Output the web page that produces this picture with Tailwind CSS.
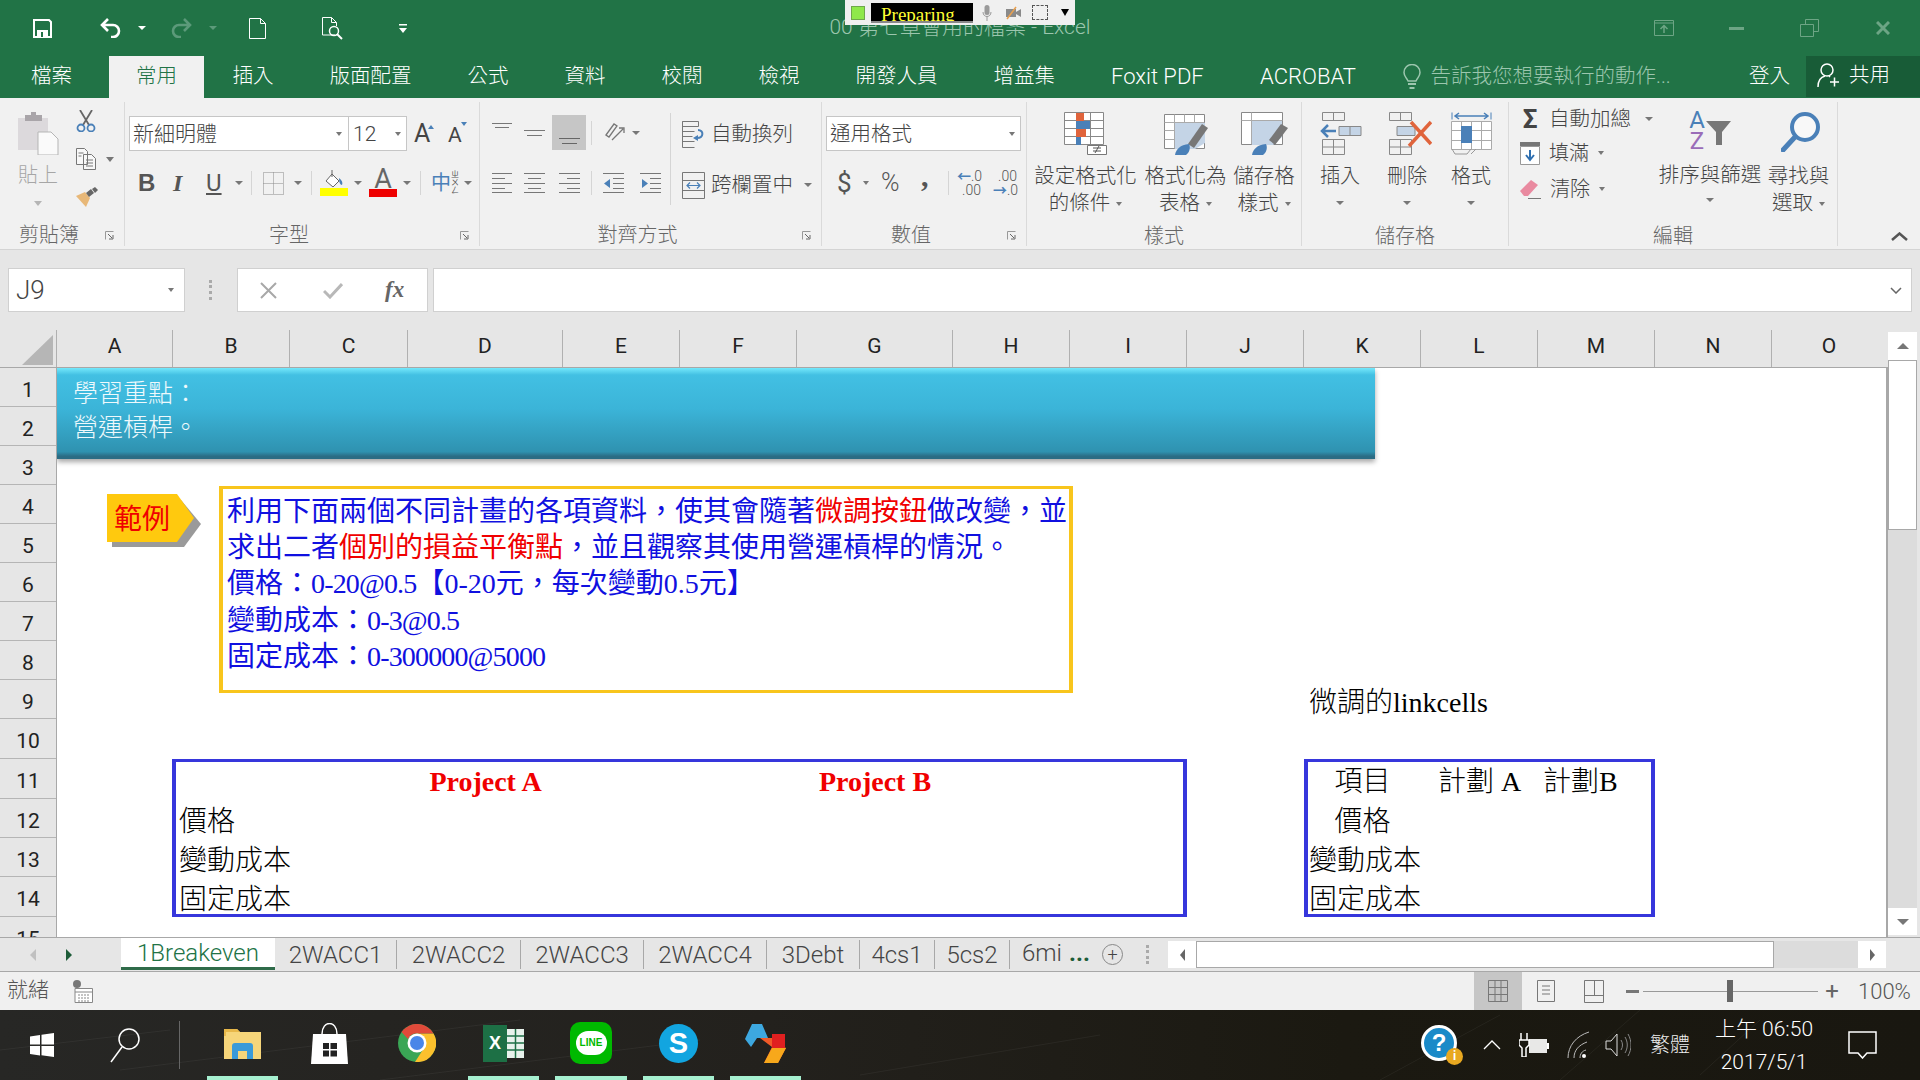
<!DOCTYPE html>
<html lang="zh-Hant">
<head>
<meta charset="UTF-8">
<title>00 第七章會用的檔案 - Excel</title>
<script src="https://cdn.jsdelivr.net/npm/@tailwindcss/browser@4"></script>
</head>
<body class="w-[1920px] h-[1080px] overflow-hidden flex flex-col bg-[#f1f1f1] text-[#444] font-['Roboto','Noto_Sans_CJK_TC',sans-serif] font-light">

<!-- title bar -->
<div class="relative h-[56px] shrink-0 bg-[#217346] grid grid-cols-[1fr_auto_1fr] items-center">
  <div class="flex items-center">
    <svg class="ml-[33px]" width="19" height="19" viewBox="0 0 19 19"><path d="M1 1h15l2 2v15H1z" fill="none" stroke="#fff" stroke-width="2"/><path d="M4 11h11v7H4z" fill="#fff"/><path d="M8 13h2v5H8z" fill="#217346"/></svg>
    <svg class="ml-[48px]" width="21" height="20" viewBox="0 0 21 20"><path d="M2 7h11a6 6 0 0 1 0 12h-2M8 1 2 7l6 6" fill="none" stroke="#fff" stroke-width="2.6"/></svg>
    <span class="ml-[17px] border-x-[4px] border-x-transparent border-t-[4px] border-t-white"></span>
    <svg class="ml-[25px]" width="21" height="20" viewBox="0 0 21 20"><path d="M19 7H8a6 6 0 0 0 0 12h2M13 1l6 6-6 6" fill="none" stroke="#5c9a7a" stroke-width="2.6"/></svg>
    <span class="ml-[17px] border-x-[4px] border-x-transparent border-t-[4px] border-t-[#5c9a7a]"></span>
    <svg class="ml-[32px]" width="17" height="21" viewBox="0 0 17 21"><path d="M.5.5h11l5 5v15H.5zM11.500.5v5h5" fill="none" stroke="#fff"/></svg>
    <svg class="ml-[56px]" width="21" height="23" viewBox="0 0 21 23"><path d="M13 18H.5V.5h9l5 5V9M9.500.5v5h5" fill="none" stroke="#fff"/><circle cx="12" cy="14" r="4.500" fill="none" stroke="#fff" stroke-width="1.500"/><path d="m15 17 5 5" stroke="#fff" stroke-width="2"/></svg>
    <svg class="ml-[56px]" width="8" height="9" viewBox="0 0 8 9"><path d="M0 0h8v1.500H0zM0 4h8L4 9z" fill="#fff"/></svg>
  </div>
  <div class="text-[21px] text-[#9cc6ae] whitespace-nowrap">00 第七章會用的檔案 - Excel</div>
  <div class="flex items-center justify-end pr-[30px]">
    <svg width="20" height="16" viewBox="0 0 20 16"><path d="M.5.5h19v15H.5zM1 3h18" fill="none" stroke="#6da585"/><path d="M10 13V6M6.500 9 10 5.500 13.500 9" fill="none" stroke="#6da585" stroke-width="1.500"/></svg>
    <span class="ml-[55px] w-[15px] h-[3px] bg-[#6da585]"></span>
    <svg class="ml-[56px]" width="19" height="18" viewBox="0 0 19 18"><path d="M.5 5.500h13v12H.5zM5.500 5.500v-5h13v12h-5" fill="none" stroke="#6da585"/></svg>
    <svg class="ml-[57px]" width="14" height="14" viewBox="0 0 14 14"><path d="m1 1 12 12M13 1 1 13" stroke="#6da585" stroke-width="3"/></svg>
  </div>
  <!-- recorder toolbar floating over the title -->
  <div class="absolute left-[845px] top-0 w-[230px] h-[25px] bg-[#f0f0f0] flex items-center">
    <span class="ml-[6px] w-[14px] h-[14px] bg-[#8fe84a] border border-[#6fa84a]"></span>
    <div class="ml-[6px] w-[102px] h-[20px] bg-black border-b-2 border-[#888] overflow-hidden pl-[10px] text-[#ffff33] text-[19px] leading-[23px] font-['Liberation_Serif',serif] font-normal">Preparing</div>
    <svg class="ml-[9px]" width="10" height="16" viewBox="0 0 10 16"><rect x="2.500" y="0" width="5" height="10" rx="2.500" fill="#9a9a9a"/><path d="M1 7c0 6 8 6 8 0M5 11v5" fill="none" stroke="#9a9a9a"/></svg>
    <svg class="ml-[13px]" width="17" height="14" viewBox="0 0 17 14"><path d="M1 3h10v8H1zM11 6l5-3v8l-5-3z" fill="#8a8a8a"/><path d="m2 13 9-12" stroke="#e8a050" stroke-width="1.500"/></svg>
    <span class="ml-[10px] w-[16px] h-[15px] border border-dashed border-[#555]"></span>
    <span class="ml-[13px] border-x-[4px] border-x-transparent border-t-[7px] border-t-black"></span>
  </div>
</div>

<!-- ribbon tabs -->
<div class="h-[42px] shrink-0 bg-[#217346] flex items-stretch gap-px text-[20.500px] text-white">
  <div class="ml-[3px] mr-[9px] pl-[28px] pr-[27px] pb-[2px] flex items-center">檔案</div>
  <div class="px-[27px] pb-[2px] flex items-center bg-[#f1f1f1] text-[#217346]">常用</div>
  <div class="px-[27.500px] pb-[2px] flex items-center">插入</div>
  <div class="px-[27.500px] pb-[2px] flex items-center">版面配置</div>
  <div class="px-[27.500px] pb-[2px] flex items-center">公式</div>
  <div class="px-[27.500px] pb-[2px] flex items-center">資料</div>
  <div class="px-[27.500px] pb-[2px] flex items-center">校閱</div>
  <div class="px-[27.500px] pb-[2px] flex items-center">檢視</div>
  <div class="px-[27.500px] pb-[2px] flex items-center">開發人員</div>
  <div class="px-[27.500px] pb-[2px] flex items-center">增益集</div>
  <div class="px-[27.500px] pb-[2px] flex items-center"><span class="w-[92px] text-center whitespace-nowrap text-[22px]">Foxit PDF</span></div>
  <div class="px-[27.500px] pb-[2px] flex items-center"><span class="w-[98px] text-center text-[22px]">ACROBAT</span></div>
  <div class="ml-[17px] pb-[2px] flex items-center text-[#9cc6ae]">
    <svg width="18" height="25" viewBox="0 0 18 25"><path d="M5 17C3 13 1 12 1 8.500a8 8 0 0 1 16 0C17 12 15 13 13 17z" fill="none" stroke="#9cc6ae" stroke-width="1.500"/><path d="M5 19h8v2H5zM6.500 23h5v2h-5z" fill="#9cc6ae"/></svg>
    <span class="ml-[10px] whitespace-nowrap">告訴我您想要執行的動作...</span>
  </div>
  <div class="ml-auto pb-[2px] flex items-center">登入</div>
  <div class="ml-[15px] w-[114px] h-[41px] bg-[#185c37] pb-[3px] flex items-center">
    <svg class="ml-[11px]" width="22" height="24" viewBox="0 0 22 24"><circle cx="10" cy="7" r="6" fill="none" stroke="#fff" stroke-width="1.500"/><path d="M1 24c0-6 3-10 7-11M12 13l1 1M13 19h9M17.500 14.500v9" fill="none" stroke="#fff" stroke-width="1.500"/></svg>
    <span class="ml-[10px]">共用</span>
  </div>
</div>

<!-- ribbon -->
<div class="h-[152px] shrink-0 flex bg-[#f1f1f1] border-b border-[#d4d4d4] pt-[4px] text-[20px] leading-[24px]">

  <!-- 剪貼簿 -->
  <div class="w-[125px] h-[144px] flex flex-col border-r border-[#dadada]">
    <div class="flex">
      <div class="ml-[17px] w-[42px] flex flex-col items-center text-[#a6a6a6]">
        <svg class="mt-[10px]" width="41" height="43" viewBox="0 0 41 43"><path d="M0 6h30v32H0z" fill="#dcd9dc"/><path d="M7 3h6V0h5v3h6v6H7z" fill="#a9a5a9"/><path d="M20 20h13l7 7v16H20z" fill="#fafafa" stroke="#b5b5b5"/></svg>
        <span class="mt-[8px]">貼上</span>
        <span class="mt-[14px] border-x-[4px] border-x-transparent border-t-[5px] border-t-[#b5b5b5]"></span>
      </div>
      <div class="ml-[17px] flex flex-col">
        <svg class="mt-[8px]" width="20" height="22" viewBox="0 0 20 22"><path d="m4 0 9 15M16 0 7 15" stroke="#666" stroke-width="1.800"/><circle cx="5" cy="18" r="3.500" fill="none" stroke="#4a80b8" stroke-width="1.800"/><circle cx="15" cy="18" r="3.500" fill="none" stroke="#4a80b8" stroke-width="1.800"/></svg>
        <div class="mt-[16px] flex items-center">
          <svg width="20" height="22" viewBox="0 0 20 22"><path d="M.5.5h8l3 3v13H.5zM7.500 6.500h8l4 4v11h-12z" fill="#f8f8f8" stroke="#777"/><path d="M2.500 5h5M2.500 8h3M10 12h7M10 15h7M10 18h7" stroke="#777"/></svg>
          <span class="ml-[10px] border-x-[4px] border-x-transparent border-t-[5px] border-t-[#777]"></span>
        </div>
        <svg class="mt-[17px]" width="22" height="20" viewBox="0 0 22 20"><path d="m0 9 9-4 5 6-4 9z" fill="#e8b878"/><path d="m10 6 5-4 3 4-5 4z" fill="#666"/><path d="m16 2 3-2 3 3-3 3z" fill="#666"/></svg>
      </div>
    </div>
    <div class="mt-auto h-[24px] pt-[2px] flex items-center">
      <span class="flex-1 text-center text-[#666]">剪貼簿</span>
      <svg class="mr-[10px] ml-[7px]" width="9" height="9" viewBox="0 0 9 9"><path d="M.5 8.500v-8h8" fill="none" stroke="#999"/><path d="m3 3 4 4M8 4v4H4" fill="none" stroke="#666"/></svg>
    </div>
  </div>

  <!-- 字型 -->
  <div class="w-[355px] h-[144px] flex flex-col border-r border-[#dadada]">
    <div class="mt-[14px] h-[35px] flex items-center">
      <div class="ml-[4px] w-[220px] h-[35px] bg-white border border-[#c6c6c6] flex items-center pl-[3px] text-[21px]">
        <span>新細明體</span>
        <span class="ml-auto mr-[6px] border-x-[3.500px] border-x-transparent border-t-[4px] border-t-[#777]"></span>
      </div>
      <div class="w-[58px] h-[35px] bg-white border border-l-0 border-[#c6c6c6] flex items-center pl-[4px] text-[21px]">
        <span>12</span>
        <span class="ml-auto mr-[5px] border-x-[3.500px] border-x-transparent border-t-[4px] border-t-[#777]"></span>
      </div>
      <div class="ml-[7px] w-[21px] flex items-start"><span class="text-[25px] leading-[28px] font-normal">A</span><span class="mt-[5px] -ml-[2px] border-x-[3px] border-x-transparent border-b-[4px] border-b-[#4a80b8]"></span></div>
      <div class="ml-[13px] w-[21px] flex items-start"><span class="text-[21px] leading-[28px] mt-[2px] font-normal">A</span><span class="mt-[3px] -ml-[1px] border-x-[3px] border-x-transparent border-t-[4px] border-t-[#4a80b8]"></span></div>
    </div>
    <div class="mt-[17px] h-[30px] flex items-center text-[#555]">
      <span class="ml-[13px] w-[14px] text-[24px] font-bold font-['Liberation_Sans',sans-serif]">B</span>
      <span class="ml-[21px] w-[11px] text-[24px] font-bold italic font-['Liberation_Serif',serif]">I</span>
      <span class="ml-[22px] w-[14px] text-[24px] font-normal underline underline-offset-2">U</span>
      <span class="ml-[15px] border-x-[4px] border-x-transparent border-t-[4px] border-t-[#777]"></span>
      <span class="ml-[8px] w-px h-[24px] bg-[#d5d5d5]"></span>
      <svg class="ml-[11px]" width="21" height="23" viewBox="0 0 21 23"><path d="M.5.500h20v22H.5zM10.500.500v22M.5 11.500h20" fill="none" stroke="#888" stroke-dasharray="1 1"/></svg>
      <span class="ml-[10px] border-x-[4px] border-x-transparent border-t-[4px] border-t-[#777]"></span>
      <span class="ml-[9px] w-px h-[24px] bg-[#d5d5d5]"></span>
      <div class="ml-[8px] w-[28px] flex flex-col items-center">
        <svg width="20" height="18" viewBox="0 0 20 18"><path d="m8 4 7 7-6 6-7-6z" fill="#fff" stroke="#666"/><path d="M8 0v7" stroke="#666"/><path d="M15 8c3 2 4 5 3 7-2 0-3-3-3-7z" fill="#4a80b8"/></svg>
        <span class="w-[28px] h-[8px] bg-[#ffff00]"></span>
      </div>
      <span class="ml-[6px] border-x-[4px] border-x-transparent border-t-[4px] border-t-[#777]"></span>
      <div class="ml-[7px] w-[28px] flex flex-col items-center"><span class="text-[27px] leading-[20px] text-[#666] font-normal">A</span><span class="w-[28px] h-[8px] bg-[#ee0000]"></span></div>
      <span class="ml-[6px] border-x-[4px] border-x-transparent border-t-[4px] border-t-[#777]"></span>
      <span class="ml-[9px] w-px h-[24px] bg-[#d5d5d5]"></span>
      <span class="ml-[10px] text-[#4a80b8] text-[20px] font-normal">中</span>
      <span class="text-[8px] leading-[8px] w-[6px] font-normal">ㄓㄨㄥ</span>
      <span class="ml-[7px] border-x-[4px] border-x-transparent border-t-[4px] border-t-[#777]"></span>
    </div>
    <div class="mt-auto h-[24px] pt-[2px] flex items-center">
      <span class="flex-1 text-center text-[#666]">字型</span>
      <svg class="mr-[10px] ml-[7px]" width="9" height="9" viewBox="0 0 9 9"><path d="M.5 8.500v-8h8" fill="none" stroke="#999"/><path d="m3 3 4 4M8 4v4H4" fill="none" stroke="#666"/></svg>
    </div>
  </div>

  <!-- 對齊方式 -->
  <div class="w-[342px] h-[144px] flex flex-col border-r border-[#dadada]">
    <div class="flex">
      <div class="w-[190px]">
        <div class="mt-[13px] h-[35px] flex items-center">
          <svg class="ml-[12px]" width="20" height="35" viewBox="0 0 20 35"><path d="M0 8.500h20M3 12.500h14" stroke="#777"/></svg>
          <svg class="ml-[12px]" width="21" height="35" viewBox="0 0 21 35"><path d="M0 15.500h21M3 20.500h15" stroke="#777"/></svg>
          <div class="ml-[7px] w-[34px] h-[35px] bg-[#c6c6c6] flex items-center justify-center"><svg width="21" height="35" viewBox="0 0 21 35"><path d="M0 23.500h21M3 28.500h15" stroke="#666"/></svg></div>
          <span class="ml-[5px] w-px h-[24px] bg-[#d5d5d5]"></span>
          <svg class="ml-[12px]" width="23" height="23" viewBox="0 0 23 23"><path d="m2 14 8-11 3 2-8 11zM8 19l11-11M15 7h5v5" fill="none" stroke="#777" stroke-width="1.300"/></svg>
          <span class="ml-[5px] border-x-[4px] border-x-transparent border-t-[4px] border-t-[#777]"></span>
        </div>
        <div class="mt-[18px] h-[30px] flex items-center">
          <svg class="ml-[12px]" width="20" height="22" viewBox="0 0 20 22"><path d="M0 1.500h20M0 6.500h13M0 11.500h20M0 16.500h13M0 20.500h20" stroke="#777"/></svg>
          <svg class="ml-[12px]" width="21" height="22" viewBox="0 0 21 22"><path d="M0 1.500h21M4 6.500h13M0 11.500h21M4 16.500h13M0 20.500h21" stroke="#777"/></svg>
          <svg class="ml-[14px]" width="21" height="22" viewBox="0 0 21 22"><path d="M0 1.500h21M8 6.500h13M0 11.500h21M8 16.500h13M0 20.500h21" stroke="#777"/></svg>
          <span class="ml-[11px] w-px h-[24px] bg-[#d5d5d5]"></span>
          <svg class="ml-[11px]" width="21" height="22" viewBox="0 0 21 22"><path d="M0 1.500h21M10 6.500h11M10 11.500h11M10 16.500h11M0 20.500h21" stroke="#777"/><path d="M1 11.500 7 7v9z" fill="#4a80b8"/></svg>
          <svg class="ml-[16px]" width="21" height="22" viewBox="0 0 21 22"><path d="M0 1.500h21M10 6.500h11M10 11.500h11M10 16.500h11M0 20.500h21" stroke="#777"/><path d="M8 11.500 2 7v9z" fill="#4a80b8"/></svg>
        </div>
      </div>
      <div class="mt-[11px] w-px h-[92px] bg-[#d5d5d5]"></div>
      <div class="ml-[11px] flex flex-col">
        <div class="mt-[14px] h-[36px] flex items-center">
          <svg width="23" height="27" viewBox="0 0 23 27"><path d="M.5.500h16v5H.5zM.5 10.500h12M.5 15.500h10M.5 20.500h12M.5 26.500h12M.5.500v26" fill="none" stroke="#777"/><path d="M16 9c6 0 6 8-1 8" fill="none" stroke="#4a80b8" stroke-width="2"/><path d="m11 17 5-3v6z" fill="#4a80b8"/></svg>
          <span class="ml-[6px] text-[20.500px] whitespace-nowrap">自動換列</span>
        </div>
        <div class="mt-[15px] h-[36px] flex items-center">
          <svg width="23" height="27" viewBox="0 0 23 27"><path d="M.5.500h22v26H.5zM.5 8.500h22M.5 18.500h22" fill="none" stroke="#777"/><path d="M5 13.500h13M8 10.500l-3 3 3 3M15 10.500l3 3-3 3" fill="none" stroke="#4a80b8" stroke-width="1.200"/></svg>
          <span class="ml-[6px] text-[20.500px] whitespace-nowrap">跨欄置中</span>
          <span class="ml-[11px] border-x-[4px] border-x-transparent border-t-[4px] border-t-[#777]"></span>
        </div>
      </div>
    </div>
    <div class="mt-auto h-[24px] pt-[2px] flex items-center">
      <span class="flex-1 text-center text-[#666]">對齊方式</span>
      <svg class="mr-[10px] ml-[7px]" width="9" height="9" viewBox="0 0 9 9"><path d="M.5 8.500v-8h8" fill="none" stroke="#999"/><path d="m3 3 4 4M8 4v4H4" fill="none" stroke="#666"/></svg>
    </div>
  </div>

  <!-- 數值 -->
  <div class="w-[205px] h-[144px] flex flex-col border-r border-[#dadada]">
    <div class="mt-[14px] ml-[4px] w-[195px] h-[35px] bg-white border border-[#c6c6c6] flex items-center pl-[3px] text-[20.500px]">
      <span>通用格式</span>
      <span class="ml-auto mr-[5px] border-x-[3.500px] border-x-transparent border-t-[4px] border-t-[#777]"></span>
    </div>
    <div class="mt-[17px] h-[30px] flex items-center text-[#555] font-normal">
      <span class="ml-[15px] w-[13px] text-[26px]">$</span>
      <span class="ml-[13px] border-x-[3px] border-x-transparent border-t-[4px] border-t-[#777]"></span>
      <span class="ml-[12px] w-[20px] text-[25px] font-light">%</span>
      <span class="ml-[20px] w-[9px] -mt-[14px] text-[30px] font-bold leading-[20px] font-['Liberation_Serif',serif]">,</span>
      <span class="ml-[18px] w-px h-[24px] bg-[#d5d5d5]"></span>
      <div class="ml-[8px] w-[24px] text-[14px] leading-[14px] text-right font-light whitespace-nowrap"><span class="text-[#4a80b8] font-bold">←</span>.0<br>.00</div>
      <div class="ml-[12px] w-[24px] text-[14px] leading-[14px] text-right font-light whitespace-nowrap">.00<br><span class="text-[#4a80b8] font-bold">→</span>.0</div>
    </div>
    <div class="mt-auto h-[24px] pt-[2px] flex items-center">
      <span class="flex-1 text-center text-[#666]">數值</span>
      <svg class="mr-[10px] ml-[7px]" width="9" height="9" viewBox="0 0 9 9"><path d="M.5 8.500v-8h8" fill="none" stroke="#999"/><path d="m3 3 4 4M8 4v4H4" fill="none" stroke="#666"/></svg>
    </div>
  </div>

  <!-- 樣式 -->
  <div class="w-[275px] h-[144px] flex flex-col border-r border-[#dadada]">
    <div class="flex pl-[7px] gap-[8px] leading-[27px] text-[20.500px]">
      <div class="w-[103px] flex flex-col items-center">
        <svg class="mt-[10px]" width="43" height="43" viewBox="0 0 43 43"><path d="M.5.500h39v32H.5zM.5 8.500h39M.5 16.500h39M.5 24.500h39M12.500.500v32M26.500.500v32" fill="#fff" stroke="#888"/><path d="M12 1h8v8h-8z" fill="#e0643c"/><path d="M12 9h14v8H12z" fill="#4a80b8"/><path d="M12 17h10v8H12z" fill="#e0643c"/><path d="M12 25h5v8h-5z" fill="#4a80b8"/><path d="M23.500 33h19v9h-19z" fill="#fff"/><path d="M23.500 33.500h19v9h-19z" fill="none" stroke="#777"/><path d="M29 36h8M29 39h8M35 34l-4 7" stroke="#555"/></svg>
        <span class="mt-[8px] whitespace-nowrap">設定格式化</span>
        <span class="flex items-center whitespace-nowrap">的條件<span class="ml-[6px] border-x-[3px] border-x-transparent border-t-[4px] border-t-[#777]"></span></span>
      </div>
      <div class="w-[81px] flex flex-col items-center">
        <svg class="mt-[12px]" width="44" height="41" viewBox="0 0 44 41"><path d="M.5.500h40v34H.5z" fill="#fff" stroke="#888"/><path d="M.5 8.500h40M.5 16.500h40M.5 25.500h40M10.500.500v34M20.500.500v34M30.500.500v34" stroke="#aaa" fill="none"/><path d="M11 9h30v20l-10 6H11z" fill="#c4d4e6"/><path d="m24 30 14-20 6 4-14 20z" fill="#777"/><path d="M11 41c1-6 5-10 14-11 2 4 0 9-3 11z" fill="#4a80b8"/></svg>
        <span class="mt-[8px] whitespace-nowrap">格式化為</span>
        <span class="flex items-center whitespace-nowrap">表格<span class="ml-[6px] border-x-[3px] border-x-transparent border-t-[4px] border-t-[#777]"></span></span>
      </div>
      <div class="w-[60px] flex flex-col items-center">
        <svg class="mt-[10px]" width="47" height="43" viewBox="0 0 47 43"><path d="M.5.500h41v32H.5z" fill="#fff" stroke="#888"/><path d="M10.500.500v32M.5 8.500h41" stroke="#aaa" fill="none"/><path d="M11 9h30v16l-9 8H11z" fill="#c4d4e6"/><path d="m28 28 12-16 7 4-13 17z" fill="#777"/><path d="M11 43c1-6 5-10 14-11 2 4 0 9-3 11z" fill="#4a80b8"/></svg>
        <span class="mt-[8px] whitespace-nowrap">儲存格</span>
        <span class="flex items-center whitespace-nowrap">樣式<span class="ml-[6px] border-x-[3px] border-x-transparent border-t-[4px] border-t-[#777]"></span></span>
      </div>
    </div>
    <div class="mt-auto h-[24px] pt-[2px] text-center text-[#666]">樣式</div>
  </div>

  <!-- 儲存格 -->
  <div class="w-[207px] h-[144px] flex flex-col border-r border-[#dadada]">
    <div class="flex pl-[8px] leading-[27px]">
      <div class="w-[60px] flex flex-col items-center">
        <svg class="mt-[10px]" width="43" height="43" viewBox="0 0 43 43"><path d="M3.500.500h22v8h-22zM14.500.500v8M3.500 27.500h22v15h-22zM3.500 35h22M14.500 27.500v15" fill="none" stroke="#888"/><path d="M20 14.500h22v9H20z" fill="#c4d4e6" stroke="#888"/><path d="M31 14.500v9" stroke="#888"/><path d="M17 19H3M9 13l-6 6 6 6" fill="none" stroke="#4a80b8" stroke-width="2.500"/></svg>
        <span class="mt-[8px]">插入</span>
        <span class="mt-[11px] border-x-[4px] border-x-transparent border-t-[4px] border-t-[#777]"></span>
      </div>
      <div class="ml-[7px] w-[60px] flex flex-col items-center">
        <svg class="mt-[10px] ml-[6px]" width="43" height="43" viewBox="0 0 43 43"><path d="M.5.500h22v8H.5zM11.500.500v8M.5 27.500h22v15H.5zM.5 35h22M11.500 27.500v15" fill="none" stroke="#888"/><path d="M8 14.500h18v9H8z" fill="#c4d4e6" stroke="#888"/><path d="m22 10 20 22M42 10 20 34" stroke="#e0643c" stroke-width="3.500"/></svg>
        <span class="mt-[8px]">刪除</span>
        <span class="mt-[11px] border-x-[4px] border-x-transparent border-t-[4px] border-t-[#777]"></span>
      </div>
      <div class="ml-[4px] w-[60px] flex flex-col items-center">
        <svg class="mt-[10px]" width="41" height="43" viewBox="0 0 41 43"><path d="M1 .5v7M40 .5v7" stroke="#4a80b8"/><path d="M4 4h33M8 1 4 4l4 3M33 1l4 3-4 3" fill="none" stroke="#4a80b8" stroke-width="1.500"/><path d="M.5 9.500h40v28H.5zM10.500 9.500v28M20.500 9.500v28M30.500 9.500v28M.5 18.500h40M.5 28.500h40" fill="#fff" stroke="#aaa"/><path d="M10 14h11v17H10z" fill="#4a80b8"/><path d="m1 37 3 5h12l4-5M20 42l5-5" fill="none" stroke="#999"/></svg>
        <span class="mt-[8px]">格式</span>
        <span class="mt-[11px] border-x-[4px] border-x-transparent border-t-[4px] border-t-[#777]"></span>
      </div>
    </div>
    <div class="mt-auto h-[24px] pt-[2px] text-center text-[#666]">儲存格</div>
  </div>

  <!-- 編輯 -->
  <div class="w-[329px] h-[144px] flex flex-col border-r border-[#dadada]">
    <div class="flex">
      <div class="ml-[11px] w-[138px] flex flex-col">
        <div class="h-[33px] flex items-center">
          <span class="w-[20px] text-center text-[26px] text-[#444] font-bold">Σ</span>
          <span class="ml-[9px] text-[20.500px] whitespace-nowrap">自動加總</span>
          <span class="ml-[14px] border-x-[4px] border-x-transparent border-t-[4px] border-t-[#777]"></span>
        </div>
        <div class="h-[36px] flex items-center">
          <svg width="20" height="23" viewBox="0 0 20 23"><path d="M0 0h20v4H0z" fill="#777"/><path d="M.5 4.500h19v18H.5z" fill="#fff" stroke="#999"/><path d="M10 8v10M6 13l4 5 4-5" fill="none" stroke="#2f6fb0" stroke-width="2"/></svg>
          <span class="ml-[9px]">填滿</span>
          <span class="ml-[9px] border-x-[3px] border-x-transparent border-t-[4px] border-t-[#777]"></span>
        </div>
        <div class="h-[35px] flex items-center">
          <svg width="21" height="20" viewBox="0 0 21 20"><path d="m0 12 11-11 7 5-10 11H4z" fill="#e98aa0"/><path d="M8 19.500h13" stroke="#777"/></svg>
          <span class="ml-[9px]">清除</span>
          <span class="ml-[9px] border-x-[3px] border-x-transparent border-t-[4px] border-t-[#777]"></span>
        </div>
      </div>
      <div class="w-[104px] flex flex-col items-center leading-[27px] text-[20.500px]">
        <div class="mt-[8px] h-[42px] flex items-start">
          <div class="w-[16px] flex flex-col items-center text-[24px] leading-[21px] font-normal"><span class="text-[#4a80b8]">A</span><span class="text-[#9a6cb8]">Z</span></div>
          <svg class="ml-[1px] mt-[11px]" width="25" height="24" viewBox="0 0 25 24"><path d="M0 0h25l-9 11v13h-6V11z" fill="#777"/></svg>
        </div>
        <span class="mt-[10px] whitespace-nowrap">排序與篩選</span>
        <span class="mt-[9px] border-x-[4px] border-x-transparent border-t-[4px] border-t-[#777]"></span>
      </div>
      <div class="ml-[6px] w-[61px] flex flex-col items-center leading-[27px] text-[20.500px]">
        <svg class="mt-[10px] ml-[4px]" width="40" height="40" viewBox="0 0 40 40"><circle cx="24" cy="15" r="13" fill="#f8f8f8" stroke="#4a80b8" stroke-width="4"/><path d="m14 25-12 13" stroke="#4a80b8" stroke-width="5" stroke-linecap="round"/></svg>
        <span class="mt-[11px] whitespace-nowrap">尋找與</span>
        <span class="flex items-center whitespace-nowrap">選取<span class="ml-[6px] border-x-[3px] border-x-transparent border-t-[4px] border-t-[#777]"></span></span>
      </div>
    </div>
    <div class="mt-auto h-[24px] pt-[2px] text-center text-[#666]">編輯</div>
  </div>

  <div class="flex-1 h-[144px] flex items-end justify-end pr-[12px] pb-[5px]">
    <svg width="17" height="9" viewBox="0 0 17 9"><path d="m1 8 7.500-6.500L16 8" fill="none" stroke="#555" stroke-width="2.500"/></svg>
  </div>
</div>

<!-- formula bar -->
<div class="h-[80px] shrink-0 bg-[#e6e6e6] pt-[18px] flex items-start">
  <div class="ml-[8px] w-[177px] h-[44px] bg-white border border-[#d0d0d0] flex items-center pl-[7px] text-[26px]">
    <span>J9</span>
    <span class="ml-auto mr-[10px] border-x-[3.500px] border-x-transparent border-t-[4px] border-t-[#777]"></span>
  </div>
  <div class="ml-[24px] w-[3px] h-[20px] mt-[12px] border-l-[3px] border-dotted border-[#aaa]"></div>
  <div class="ml-[25px] w-[191px] h-[44px] bg-white border border-[#d0d0d0] flex items-center">
    <svg class="ml-[22px]" width="17" height="17" viewBox="0 0 17 17"><path d="m1 1 15 15M16 1 1 16" stroke="#a8a8a8" stroke-width="2"/></svg>
    <svg class="ml-[46px]" width="20" height="17" viewBox="0 0 20 17"><path d="m1 9 6 6L19 2" fill="none" stroke="#b8b8b8" stroke-width="3"/></svg>
    <span class="ml-[42px] text-[23px] italic font-bold text-[#666] font-['Liberation_Serif',serif]">fx</span>
  </div>
  <div class="ml-[5px] flex-1 mr-[8px] h-[44px] bg-white border border-[#d0d0d0] flex items-center justify-end pr-[9px]">
    <svg width="12" height="7" viewBox="0 0 12 7"><path d="m1 1 5 5 5-5" fill="none" stroke="#666" stroke-width="1.500"/></svg>
  </div>
</div>

<!-- worksheet -->
<div class="h-[607px] shrink-0 flex bg-[#e6e6e6]">
  <div class="w-[1888px] flex flex-col">
    <div class="h-[38px] shrink-0 flex border-b border-[#a8a8a8] text-[21px] text-[#222] font-normal">
      <div class="w-[57px] flex items-end justify-end border-r border-[#b0b0b0] pb-[2px] pr-[3px]"><svg width="31" height="30" viewBox="0 0 31 30"><path d="M31 0v30H0z" fill="#b6b6b6"/></svg></div>
      <div class="w-[116px] pb-[4px] flex items-center justify-center border-r border-[#b0b0b0]">A</div>
      <div class="w-[117px] pb-[4px] flex items-center justify-center border-r border-[#b0b0b0]">B</div>
      <div class="w-[118px] pb-[4px] flex items-center justify-center border-r border-[#b0b0b0]">C</div>
      <div class="w-[155px] pb-[4px] flex items-center justify-center border-r border-[#b0b0b0]">D</div>
      <div class="w-[117px] pb-[4px] flex items-center justify-center border-r border-[#b0b0b0]">E</div>
      <div class="w-[117px] pb-[4px] flex items-center justify-center border-r border-[#b0b0b0]">F</div>
      <div class="w-[156px] pb-[4px] flex items-center justify-center border-r border-[#b0b0b0]">G</div>
      <div class="w-[117px] pb-[4px] flex items-center justify-center border-r border-[#b0b0b0]">H</div>
      <div class="w-[117px] pb-[4px] flex items-center justify-center border-r border-[#b0b0b0]">I</div>
      <div class="w-[117px] pb-[4px] flex items-center justify-center border-r border-[#b0b0b0]">J</div>
      <div class="w-[117px] pb-[4px] flex items-center justify-center border-r border-[#b0b0b0]">K</div>
      <div class="w-[117px] pb-[4px] flex items-center justify-center border-r border-[#b0b0b0]">L</div>
      <div class="w-[117px] pb-[4px] flex items-center justify-center border-r border-[#b0b0b0]">M</div>
      <div class="w-[117px] pb-[4px] flex items-center justify-center border-r border-[#b0b0b0]">N</div>
      <div class="w-[114px] pb-[4px] flex items-center justify-center">O</div>
    </div>
    <div class="flex h-[569px]">
      <div class="w-[57px] shrink-0 overflow-hidden text-[21px] text-[#222] font-normal border-r border-[#a8a8a8]">
        <div class="h-[39px] pt-[7px] flex items-center justify-center border-b border-[#b5b5b5]">1</div>
        <div class="h-[39px] pt-[7px] flex items-center justify-center border-b border-[#b5b5b5]">2</div>
        <div class="h-[39px] pt-[7px] flex items-center justify-center border-b border-[#b5b5b5]">3</div>
        <div class="h-[39px] pt-[7px] flex items-center justify-center border-b border-[#b5b5b5]">4</div>
        <div class="h-[39px] pt-[7px] flex items-center justify-center border-b border-[#b5b5b5]">5</div>
        <div class="h-[39px] pt-[7px] flex items-center justify-center border-b border-[#b5b5b5]">6</div>
        <div class="h-[39px] pt-[7px] flex items-center justify-center border-b border-[#b5b5b5]">7</div>
        <div class="h-[39px] pt-[7px] flex items-center justify-center border-b border-[#b5b5b5]">8</div>
        <div class="h-[39px] pt-[7px] flex items-center justify-center border-b border-[#b5b5b5]">9</div>
        <div class="h-[40px] pt-[7px] flex items-center justify-center border-b border-[#b5b5b5]">10</div>
        <div class="h-[40px] pt-[7px] flex items-center justify-center border-b border-[#b5b5b5]">11</div>
        <div class="h-[39px] pt-[7px] flex items-center justify-center border-b border-[#b5b5b5]">12</div>
        <div class="h-[39px] pt-[7px] flex items-center justify-center border-b border-[#b5b5b5]">13</div>
        <div class="h-[40px] pt-[7px] flex items-center justify-center border-b border-[#b5b5b5]">14</div>
        <div class="h-[39px] pt-[7px] flex items-center justify-center">15</div>
      </div>
      <div class="relative flex-1 bg-white border-r-2 border-[#a8a8a8] overflow-hidden font-['Liberation_Serif','Noto_Sans_CJK_TC',serif] font-light text-[28px] leading-[45px] text-black grid grid-cols-[116px_117px_118px_155px_117px_117px_156px_117px_117px_117px_117px_117px_117px_117px_113px] grid-rows-[39px_39px_39px_39px_39px_39px_39px_39px_39px_40px_40px_39px_39px_40px_20px]">
        <!-- cells -->
        <div class="col-start-11 row-start-9 pl-[5px] whitespace-nowrap">微調的linkcells</div>
        <div class="col-start-2 col-end-10 row-start-11 row-end-15 border-y-[3px] border-x-[4px] border-[#3636dc] -ml-px"></div>
        <div class="col-start-11 col-end-14 row-start-11 row-end-15 border-y-[3px] border-x-[4px] border-[#3636dc]"></div>
        <div class="col-start-4 row-start-11 text-center font-bold text-[#f00000] whitespace-nowrap">Project A</div>
        <div class="col-start-7 row-start-11 text-center font-bold text-[#f00000] whitespace-nowrap">Project B</div>
        <div class="col-start-2 row-start-12 pl-[6px]">價格</div>
        <div class="col-start-2 row-start-13 pl-[6px] whitespace-nowrap">變動成本</div>
        <div class="col-start-2 row-start-14 pl-[6px] whitespace-nowrap">固定成本</div>
        <div class="col-start-11 row-start-11 text-center">項目</div>
        <div class="col-start-12 row-start-11 text-center whitespace-nowrap">計劃 A</div>
        <div class="col-start-13 row-start-11 pl-[5px] whitespace-nowrap">計劃B</div>
        <div class="col-start-11 row-start-12 text-center">價格</div>
        <div class="col-start-11 row-start-13 pl-[5px] whitespace-nowrap">變動成本</div>
        <div class="col-start-11 row-start-14 pl-[5px] whitespace-nowrap">固定成本</div>

        <!-- floating shapes -->
        <div class="absolute left-0 top-0 w-[1318px] h-[91px] pl-[16px] pt-[6px] text-[25px] leading-[34px] text-[#eef9fc] font-['Noto_Sans_CJK_TC',sans-serif] font-light bg-[linear-gradient(#74e8fb_0px,#42c0e3_7px,#3bb4d8_45%,#2f92b0_92%,#2b6c84_97%,#2b6c84_100%)] shadow-[0_3px_5px_rgba(0,0,0,0.35)]">學習重點：<br>營運槓桿。</div>
        <svg class="absolute left-[50px] top-[126px]" width="95" height="54" viewBox="0 0 95 54"><path d="M5 53V6h69l20 24-17 23z" fill="#9a9a9a"/><path d="M0 48V0h70l17 24-17 24z" fill="#ffc90e"/></svg>
        <div class="absolute left-[57px] top-[127px] text-[28px] leading-[44px] font-normal text-[#f00000] font-['Noto_Sans_CJK_TC',sans-serif]">範例</div>
        <div class="absolute left-[162px] top-[118px] w-[854px] h-[207px] bg-white border-y-[3px] border-x-[4px] border-[#f8c51c] pl-[4px] pt-[5px] text-[28px] font-normal leading-[36.200px] text-[#1010e0] whitespace-nowrap">
          <div>利用下面兩個不同計畫的各項資料，使其會隨著<span class="text-[#f00000]">微調按鈕</span>做改變，並</div>
          <div>求出二者<span class="text-[#f00000]">個別的損益平衡點</span>，並且觀察其使用營運槓桿的情況。</div>
          <div>價格：<span class="tracking-[-0.030em]">0-20@0.5</span>【0-20元，每次變動0.5元】</div>
          <div>變動成本：<span class="tracking-[-0.030em]">0-3@0.5</span></div>
          <div>固定成本：<span class="tracking-[-0.030em]">0-300000@5000</span></div>
        </div>
      </div>
    </div>
  </div>
  <!-- vertical scrollbar -->
  <div class="w-[32px] flex flex-col pt-[2px] pb-[2px] pr-[3px]">
    <div class="h-[28px] bg-white flex items-center justify-center"><span class="border-x-[6px] border-x-transparent border-b-[6px] border-b-[#777]"></span></div>
    <div class="h-[170px] bg-white border border-[#a8a8a8]"></div>
    <div class="flex-1 bg-[#dcdcdc]"></div>
    <div class="h-[27px] bg-white flex items-center justify-center"><span class="border-x-[6px] border-x-transparent border-t-[6px] border-t-[#777]"></span></div>
  </div>
</div>

<!-- sheet tabs -->
<div class="h-[35px] shrink-0 bg-[#e6e6e6] border-y border-[#a8a8a8] flex items-stretch text-[24px] leading-[30px] text-[#444] whitespace-nowrap">
  <div class="w-[121px] flex items-center">
    <span class="ml-[30px] border-y-[6px] border-y-transparent border-r-[6px] border-r-[#c0c0c0]"></span>
    <span class="ml-[30px] border-y-[6px] border-y-transparent border-l-[6px] border-l-[#1d5c38]"></span>
  </div>
  <div class="w-[154px] h-[32px] bg-white border-b-[3px] border-[#2f6b49] text-[#217346] text-center">1Breakeven</div>
  <div class="w-[122px] my-[2px] border-r border-[#a8a8a8] text-center">2WACC1</div>
  <div class="w-[124px] my-[2px] border-r border-[#a8a8a8] text-center">2WACC2</div>
  <div class="w-[123px] my-[2px] border-r border-[#a8a8a8] text-center">2WACC3</div>
  <div class="w-[123px] my-[2px] border-r border-[#a8a8a8] text-center">2WACC4</div>
  <div class="w-[93px] my-[2px] border-r border-[#a8a8a8] text-center">3Debt</div>
  <div class="w-[75px] my-[2px] border-r border-[#a8a8a8] text-center">4cs1</div>
  <div class="w-[75px] my-[2px] border-r border-[#a8a8a8] text-center">5cs2</div>
  <div class="ml-[12px] w-[47px] text-[#444]">6mi</div>
  <div class="w-[25px] text-[#1d5c38] font-bold">...</div>
  <div class="ml-[8px] flex items-center"><span class="w-[21px] h-[21px] rounded-full border border-[#888] flex items-center justify-center text-[18px] leading-none">+</span></div>
  <div class="ml-[23px] w-[3px] my-[7px] border-l-[3px] border-dotted border-[#aaa]"></div>
  <div class="ml-[19px] my-[3px] w-[28px] bg-white flex items-center justify-center"><span class="border-y-[6px] border-y-transparent border-r-[5px] border-r-[#666]"></span></div>
  <div class="my-[3px] w-[578px] bg-white border border-[#a8a8a8]"></div>
  <div class="my-[3px] w-[84px] bg-[#dcdcdc]"></div>
  <div class="my-[3px] w-[28px] bg-white flex items-center justify-center"><span class="border-y-[6px] border-y-transparent border-l-[5px] border-l-[#666]"></span></div>
</div>

<!-- status bar -->
<div class="h-[38px] shrink-0 bg-[#f0f0f0] flex items-center text-[21px]">
  <span class="ml-[7px] text-[#555]">就緒</span>
  <svg class="ml-[23px]" width="21" height="23" viewBox="0 0 21 23"><circle cx="5" cy="4" r="4" fill="#777"/><path d="M3 8.500h17.500v14H3zM3 12h17" fill="#fff" stroke="#888"/><path d="M6 15h12M6 18h12M6 21h12" stroke="#888" stroke-dasharray="2 1"/></svg>
  <div class="ml-auto flex items-center h-full">
    <div class="w-[48px] h-full bg-[#c6c6c6] flex items-center justify-center"><svg width="20" height="22" viewBox="0 0 20 22"><path d="M.5.500h19v21H.5zM7 .5v21M13 .5v21M.5 7.500h19M.5 14.500h19" fill="none" stroke="#777"/></svg></div>
    <svg class="ml-[15px]" width="18" height="22" viewBox="0 0 18 22"><path d="M.5.500h17v21H.5z" fill="none" stroke="#777"/><path d="M5 6h8M5 10h8M5 14h8" stroke="#777"/></svg>
    <svg class="ml-[29px]" width="20" height="23" viewBox="0 0 20 23"><path d="M.5.500h19v22H.5zM.5 15.500h19M10.500.500v15" fill="none" stroke="#777"/></svg>
    <span class="ml-[22px] w-[13px] h-[3px] bg-[#777]"></span>
    <span class="ml-[4px] w-[84px] h-px bg-[#999]"></span>
    <span class="w-[6px] h-[22px] bg-[#666]"></span>
    <span class="w-[85px] h-px bg-[#999]"></span>
    <span class="ml-[7px] w-[14px] text-center text-[24px] leading-none font-normal text-[#666]">+</span>
    <span class="ml-[19px] mr-[9px] w-[53px] text-[22px] text-[#555]">100%</span>
  </div>
</div>

<!-- taskbar -->
<div class="relative h-[70px] shrink-0 flex items-stretch bg-[linear-gradient(90deg,#272725,#23211d_40%,#1b1911_70%,#191710)] text-white">
  <svg class="absolute inset-0" width="1920" height="70" viewBox="0 0 1920 70"><path d="M0 40 170 20M120 60 520 10M380 70 700 30M860 65 1100 25M1380 70 1500 5M1560 70 1640 0M1700 65 1760 10" stroke="#ffffff" stroke-opacity=".05" fill="none"/></svg>
  <div class="relative w-[84px] flex items-center justify-center"><svg width="24" height="24" viewBox="0 0 24 24"><path d="M0 3.500 10 2v9.500H0zM11.500 1.800 24 0v11.500H11.500zM0 13h10v9.500L0 21zM11.500 13H24v11l-12.500-1.800z" fill="#fff"/></svg></div>
  <div class="relative w-[82px] flex items-center justify-center"><svg width="32" height="36" viewBox="0 0 32 36"><circle cx="20" cy="12" r="10" fill="none" stroke="#fff" stroke-width="1.500"/><path d="m13 20-11 15" stroke="#fff" stroke-width="1.500"/></svg></div>
  <div class="relative my-[11px] ml-[13px] w-px bg-[#666]"></div>
  <div class="relative ml-[27px] flex gap-[16px] h-full">
    <div class="w-[71px] h-full flex items-center justify-center border-b-4 border-[#a6f0d0]">
      <svg width="37" height="32" viewBox="0 0 37 32"><path d="M0 2h13l3 3h21v27H0z" fill="#f6d57a"/><path d="M0 2h13l3 3H2v4H0z" fill="#e8b84a"/><path d="M8 32V19a3 3 0 0 1 3-3h15a3 3 0 0 1 3 3v13h-6v-8h-9v8z" fill="#3a9ad9"/></svg>
    </div>
    <div class="w-[71px] h-full flex items-center justify-center border-b-4 border-transparent">
      <svg width="37" height="41" viewBox="0 0 37 41"><path d="M2 11h33l2 30H0z" fill="#fff"/><path d="M11 11c0-14 15-14 15 0" fill="none" stroke="#fff" stroke-width="1.500"/><path d="M12 20h6v6h-6zM19.500 20H26v6h-6.500zM12 27.500h6v6h-6zM19.500 27.500H26v6h-6.500z" fill="#222"/></svg>
    </div>
    <div class="w-[71px] h-full flex items-center justify-center border-b-4 border-transparent">
      <svg width="38" height="38" viewBox="0 0 38 38"><circle cx="19" cy="19" r="19" fill="#3aa655"/><path d="M35.500 9.500A19 19 0 0 1 17 37.900L26 24l-7-14.500z" fill="#fbc02d"/><path d="M3.500 8A19 19 0 0 1 35.500 9.500H19a9.500 9.500 0 0 0-9 5.500z" fill="#e04a3a"/><circle cx="19" cy="19" r="9.500" fill="#fff"/><circle cx="19" cy="19" r="7" fill="#4a86e8"/></svg>
    </div>
    <div class="w-[71px] h-full flex items-center justify-center border-b-4 border-[#a6f0d0]">
      <div class="flex items-center">
        <div class="w-[24px] h-[37px] bg-[#1d7045] flex items-center justify-center text-[18px] font-bold leading-none font-['Liberation_Sans',sans-serif]">X</div>
        <svg width="17" height="29" viewBox="0 0 17 29"><path d="M0 0h17v29H0z" fill="#e8f2ec"/><path d="M0 7h17M0 14h17M0 21h17M8.500 0v29" stroke="#1d7045" stroke-width="1.500"/></svg>
      </div>
    </div>
    <div class="w-[72px] h-full flex items-center justify-center border-b-4 border-[#a6f0d0]">
      <div class="w-[42px] h-[42px] rounded-[10px] bg-[#00b900] flex items-center justify-center">
        <div class="w-[31px] h-[24px] rounded-[12px] bg-white text-[#00b900] text-[10px] leading-[24px] font-bold text-center font-['Liberation_Sans',sans-serif]">LINE</div>
      </div>
    </div>
    <div class="w-[71px] h-full flex items-center justify-center border-b-4 border-[#a6f0d0]">
      <div class="w-[39px] h-[39px] rounded-full bg-[#12a5e0] flex items-center justify-center text-[29px] font-bold font-['Liberation_Sans',sans-serif] leading-none">S</div>
    </div>
    <div class="w-[71px] h-full flex items-center justify-center border-b-4 border-[#a6f0d0]">
      <svg width="41" height="39" viewBox="0 0 41 39"><path d="M7 0h10l6 14h-11l-6 9-6-8z" fill="#3da8e0"/><path d="M15 14h12l14 10-8 15H19l8-16z" fill="#f05a28"/><path d="M27 10h13v14h-13z" fill="#e02020"/><path d="M27 24h14l-8 15H19z" fill="#f7a81b"/></svg>
    </div>
  </div>
  <div class="relative ml-auto flex items-center">
    <div class="relative w-[42px] h-[40px]">
      <div class="w-[36px] h-[36px] rounded-full bg-[#1a8ac8] border-[3px] border-white flex items-center justify-center text-[24px] font-bold font-['Liberation_Sans',sans-serif]">?</div>
      <div class="absolute right-0 bottom-0 w-[17px] h-[17px] rounded-full bg-[#e8a820] text-[12px] leading-[17px] text-center font-bold">i</div>
    </div>
    <svg class="ml-[20px]" width="18" height="10" viewBox="0 0 18 10"><path d="m1 9 8-8 8 8" fill="none" stroke="#fff" stroke-width="1.300"/></svg>
    <svg class="ml-[18px]" width="30" height="24" viewBox="0 0 30 24"><path d="M2 0v7M8 0v7M0 7h10v5l-3 3v9H3v-9L0 12z" fill="none" stroke="#fff" stroke-width="1.500"/><path d="M10 6h18v14H10z" fill="#fff" fill-opacity=".9"/><path d="M28 10h2v6h-2z" fill="#fff"/></svg>
    <svg class="ml-[18px]" width="23" height="28" viewBox="0 0 23 28"><path d="M1 27C1 15 9 5 22 1M7 27c0-8 5-13 13-16M13 27c0-4 2-7 6-8" fill="none" stroke="#bbb"/><circle cx="17" cy="25" r="2" fill="#fff"/></svg>
    <svg class="ml-[15px]" width="26" height="24" viewBox="0 0 26 24"><path d="M1 8h5l6-7v22l-6-7H1z" fill="none" stroke="#ddd"/><path d="M16 7c2 3 2 7 0 10M20 4c3 5 3 11 0 16M23 1c4 7 4 15 0 22" fill="none" stroke="#888"/></svg>
    <span class="ml-[19px] text-[20px] text-[#eee]">繁體</span>
    <div class="ml-[24px] w-[100px] pt-[2px] text-[21px] leading-[33px] text-center whitespace-nowrap">上午 06:50<br>2017/5/1</div>
    <svg class="ml-[34px] mr-[43px]" width="29" height="28" viewBox="0 0 29 28"><path d="M1 1h27v21h-9l-4.500 5L10 22H1z" fill="none" stroke="#fff" stroke-width="1.500"/></svg>
  </div>
</div>

</body>
</html>
